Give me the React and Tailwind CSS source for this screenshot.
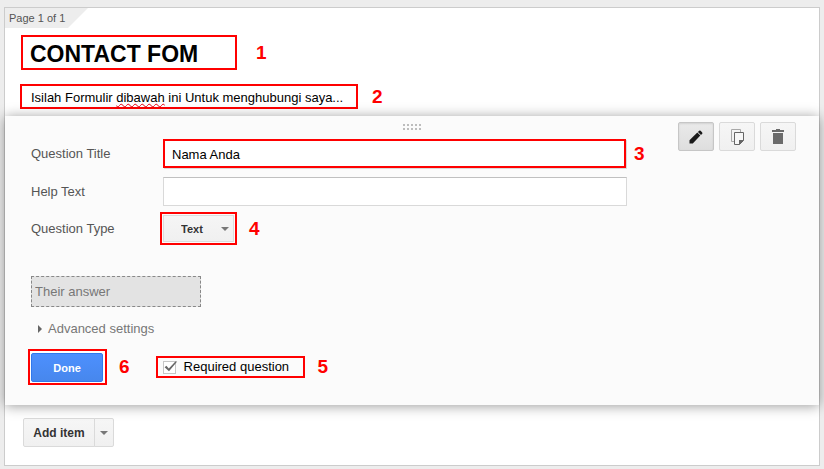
import { useState } from 'react';

function Marker({ children, className }) {
  return (
    <span className={`shrink-0 text-[19px] leading-6 font-bold text-[#f00] ${className}`}>
      {children}
    </span>
  );
}

function ToolButton({ label, active, children }) {
  return (
    <button
      aria-label={label}
      className={`flex h-[29px] w-9 items-center justify-center rounded-xs border bg-linear-to-b ${
        active
          ? 'border-[#c6c6c6] from-[#eaeaea] to-[#dedede] shadow-[inset_0_1px_2px_rgba(0,0,0,0.1)]'
          : 'border-[#dadada] from-[#f6f6f6] to-[#f0f0f0]'
      }`}
    >
      {children}
    </button>
  );
}

function DragHandle() {
  return (
    <div className="absolute top-2 left-1/2 grid -translate-x-1/2 grid-cols-5 gap-[2px]">
      {Array.from({ length: 10 }, (_, i) => (
        <span key={i} className="size-[2px] bg-[#bdbdbd]" />
      ))}
    </div>
  );
}

function QuestionEditor() {
  const [title, setTitle] = useState('Nama Anda');
  const [help, setHelp] = useState('');
  const [type, setType] = useState('Text');
  const [required, setRequired] = useState(true);

  return (
    <section className="relative mt-[7px] flex bg-[#fbfbfb] pr-[23px] pb-5 pl-[26px] shadow-[0_1px_12px_rgba(0,0,0,0.4)]">
      <DragHandle />

      <div className="flex-1 pt-[23px]">
        <div className="flex flex-col gap-[9px] text-[#555]">
          <div className="flex items-center">
            <label htmlFor="q-title" className="w-[132px] shrink-0">Question Title</label>
            <input
              id="q-title"
              value={title}
              onChange={(e) => setTitle(e.target.value)}
              className="h-[29px] w-full max-w-[463px] border-2 border-[#f00] bg-white px-[7px] pt-[2px] text-black shadow-[1px_1px_0_#d9d9d9] outline-none"
            />
            <Marker className="-my-1 ml-2">3</Marker>
          </div>

          <div className="flex items-center">
            <label htmlFor="q-help" className="w-[132px] shrink-0">Help Text</label>
            <input
              id="q-help"
              value={help}
              onChange={(e) => setHelp(e.target.value)}
              className="h-[29px] w-full max-w-[464px] border border-[#d9d9d9] border-t-[#c0c0c0] bg-white px-2 text-black outline-none"
            />
          </div>

          <div className="flex items-center">
            <label htmlFor="q-type" className="w-[132px] shrink-0">Question Type</label>
            <div className="relative">
              <select
                id="q-type"
                value={type}
                onChange={(e) => setType(e.target.value)}
                className="block h-[27px] w-[71px] appearance-none border border-[#dcdcdc] bg-linear-to-b from-[#f5f5f5] to-[#f0f0f0] pl-[17px] text-[11px] font-bold text-[#333] outline-2 outline-offset-1 outline-[#f00]"
              >
                <option>Text</option>
                <option>Paragraph text</option>
                <option>Multiple choice</option>
                <option>Checkboxes</option>
              </select>
              <svg viewBox="0 0 8 4" className="pointer-events-none absolute top-3 right-[5px] h-1 w-2 fill-[#777]">
                <path d="M0 0h8L4 4z" />
              </svg>
            </div>
            <Marker className="-my-1 ml-[15px]">4</Marker>
          </div>
        </div>

        <input
          disabled
          aria-label="Answer preview"
          value="Their answer"
          className="mt-[34px] block h-[31px] w-[170px] border border-dashed border-[#888] bg-[#e3e3e3] px-[3px] text-[#777]"
        />

        <button className="mt-[14px] flex h-4 items-center gap-[6px] pl-[7px] text-[#777]">
          <svg viewBox="0 0 4 8" className="h-2 w-1 fill-[#666]">
            <path d="M0 0l4 4-4 4z" />
          </svg>
          Advanced settings
        </button>

        <div className="mt-3 -ml-[3px] flex items-center">
          <div className="border-2 border-[#f00] bg-white pt-[2px] pr-[2px] pb-px pl-px">
            <button className="block h-[29px] w-[72px] rounded-xs border border-[#3079ed] bg-linear-to-b from-[#4d90fe] to-[#4787ed] text-[11px] font-bold text-white">
              Done
            </button>
          </div>
          <Marker className="ml-3">6</Marker>

          <label className="ml-[26px] flex h-[22px] w-[149px] items-center border-2 border-[#f00] pl-[5px] text-black">
            <span className="relative mr-2 block size-[13px]">
              <input
                type="checkbox"
                checked={required}
                onChange={(e) => setRequired(e.target.checked)}
                className="block size-[13px] appearance-none border border-[#c6c6c6] bg-white"
              />
              {required && (
                <svg viewBox="0 0 15 13" className="pointer-events-none absolute top-0 left-0 h-[13px] w-[15px]">
                  <path d="M1.6 6.2L3.4 4.8L5.8 7.4L12.4 0.4L14.2 0.4L6 10.2z" fill="#666" />
                </svg>
              )}
            </span>
            Required question
          </label>
          <Marker className="ml-[13px]">5</Marker>
        </div>
      </div>

      <div className="flex gap-[5px] self-start pt-[6px]">
        <ToolButton label="Edit" active>
          <svg viewBox="0 0 14 14" className="size-[14px] fill-[#1a1a1a]">
            <path d="M0.5 13.5V10.2L8.3 2.6L11.3 5.6L3.8 13.5z" />
            <path d="M8.9 2L10.2 0.8Q10.9 0.2 11.6 0.8L13.2 2.4Q13.8 3.1 13.2 3.8L12 5z" />
          </svg>
        </ToolButton>
        <ToolButton label="Duplicate">
          <svg viewBox="0 0 13 16" className="h-4 w-[13px]" fill="none">
            <path d="M3 12.5H0.5V0.5H9.5V3" stroke="#a8a8a8" />
            <path d="M3.5 3.5H12.5V11.5L8.5 15.5H3.5z" fill="#f7f7f7" stroke="#666" />
            <path d="M8 16V11H13z" fill="#666" />
          </svg>
        </ToolButton>
        <ToolButton label="Delete">
          <svg viewBox="0 0 12 15" className="h-[15px] w-3 fill-[#6b6b6b]">
            <path d="M0 1H4V0H8V1H12V3H0z" />
            <path d="M1 4H11V15H1z" />
          </svg>
        </ToolButton>
      </div>
    </section>
  );
}

function App() {
  const [formTitle, setFormTitle] = useState('CONTACT FOM');

  return (
    <div className="min-h-screen bg-[#ededed] px-1 pt-[7px] pb-[3px] font-['Liberation_Sans',Arial,sans-serif] text-[13px] leading-4">
      <main className="border border-[#ccc] bg-white">
        {/* Page tab */}
        <div className="h-5 w-[83px] bg-[#ededed] pl-1 text-[11px] leading-5 text-[#555] [clip-path:polygon(0_0,100%_0,63px_100%,0_100%)]">
          Page 1 of 1
        </div>

        <div className="mt-[7px] ml-4 flex items-center">
          <input
            aria-label="Form title"
            value={formTitle}
            onChange={(e) => setFormTitle(e.target.value)}
            className="h-[35px] w-[216px] border-2 border-[#f00] px-[7px] pt-1 text-[23px] font-bold text-black outline-none"
          />
          <Marker className="ml-[19px]">1</Marker>
        </div>

        <div className="mt-[14px] ml-[15px] flex items-center">
          <p className="h-[25px] w-[338px] border-2 border-[#f00] pl-[9px] leading-[23px] text-black">
            Isilah Formulir{' '}
            <span className="underline decoration-red-600 decoration-wavy decoration-1 [text-decoration-skip-ink:none]">
              dibawah
            </span>{' '}
            ini Untuk menghubungi saya...
          </p>
          <Marker className="ml-[14px]">2</Marker>
        </div>

        <QuestionEditor />

        {/* Footer */}
        <div className="mt-[13px] mb-[18px] ml-[18px] flex h-[29px] text-[#333]">
          <button className="w-[72px] rounded-l-xs border border-[#dadada] bg-linear-to-b from-[#f6f6f6] to-[#f0f0f0] text-[12px] font-bold">
            Add item
          </button>
          <button
            aria-label="More item types"
            className="-ml-px flex w-5 items-center justify-center rounded-r-xs border border-[#dadada] bg-linear-to-b from-[#f6f6f6] to-[#f0f0f0]"
          >
            <svg viewBox="0 0 8 4" className="h-1 w-2 fill-[#777]">
              <path d="M0 0h8L4 4z" />
            </svg>
          </button>
        </div>
      </main>
    </div>
  );
}

export default App;
